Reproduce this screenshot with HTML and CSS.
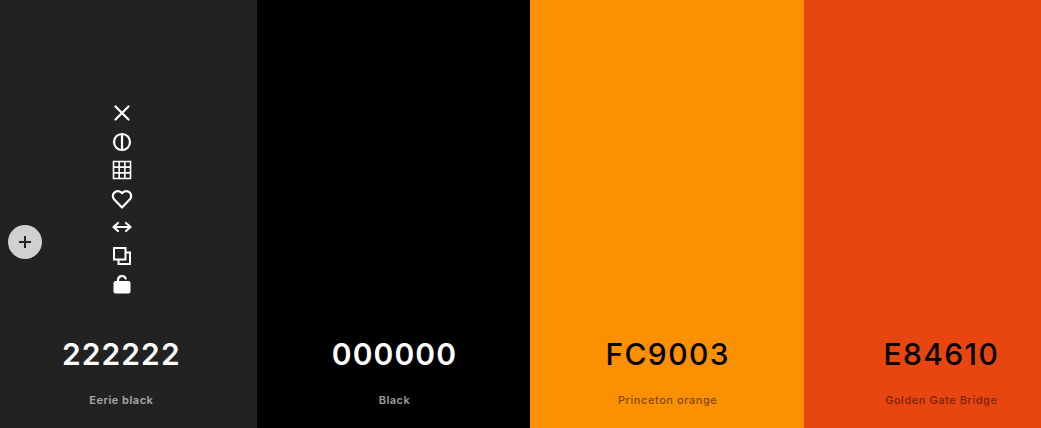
FILE: index.html
```html
<!DOCTYPE html>
<html lang="en">
<head>
<meta charset="utf-8">
<title>Palette</title>
<link rel="stylesheet" href="styles.css">
</head>
<body>
<main class="palette">
  <section class="swatch swatch-eerie">
    <div class="tools">
      <span class="tool"><svg viewBox="0 0 24 24" class="icon"><path d="M5.500 5.500l13 13M18.500 5.500l-13 13"/></svg></span>
      <span class="tool"><svg viewBox="0 0 24 24" class="icon"><circle cx="12" cy="12" r="8"/><path d="M12 4v16"/></svg></span>
      <span class="tool"><svg viewBox="0 0 24 24" class="icon icon-grid"><path d="M3.500 3.500h17v17h-17zM9.170 3.500v17M14.830 3.500v17M3.500 9.170h17M3.500 14.830h17"/></svg></span>
      <span class="tool"><svg viewBox="0 0 24 24" class="icon"><path d="M12 20.500l-7.700-7.900a4.900 4.900 0 0 1 0-7 4.900 4.900 0 0 1 7 0l.7.700.7-.700a4.900 4.900 0 0 1 7 0 4.900 4.900 0 0 1 0 7z"/></svg></span>
      <span class="tool"><svg viewBox="0 0 24 24" class="icon icon-arrows"><path d="M4.500 12h15M8 8l-4.500 4L8 16M16 8l4.500 4-4.500 4"/></svg></span>
      <span class="tool"><svg viewBox="0 0 24 24" class="icon icon-square"><path d="M4 4h11.500v11.500H4zM15.500 8.500H20V20H8.500v-4.500"/></svg></span>
      <span class="tool"><svg viewBox="0 0 24 24" class="icon"><path class="solid" d="M5.500 9h13a2 2 0 0 1 2 2v8.500a2 2 0 0 1-2 2h-13a2 2 0 0 1-2-2V11a2 2 0 0 1 2-2z"/><path d="M8 9.500V8a4 4 0 0 1 7.700-1.500"/></svg></span>
    </div>
    <h2 class="hex">222222</h2>
    <p class="name">Eerie black</p>
  </section>
  <section class="swatch swatch-black">
    <h2 class="hex">000000</h2>
    <p class="name">Black</p>
  </section>
  <section class="swatch swatch-orange">
    <h2 class="hex">FC9003</h2>
    <p class="name">Princeton orange</p>
  </section>
  <section class="swatch swatch-red">
    <h2 class="hex">E84610</h2>
    <p class="name">Golden Gate Bridge</p>
  </section>
</main>
<button class="add" type="button" aria-label="Add colour"><svg viewBox="0 0 24 24" class="add-icon"><path d="M12 6v12M6 12h12"/></svg></button>
</body>
</html>
```
FILE: styles.css
```css
html, body {
  margin: 0;
  height: 100%;
  overflow: hidden;
}
body {
  font-family: Inter, "Liberation Sans", sans-serif;
  background: #000;
  position: relative;
}
.palette {
  display: grid;
  grid-template-columns: repeat(4, 273.67px);
  height: 428px;
  margin-left: -17px;
  width: 1095px;
}
.swatch {
  display: flex;
  flex-direction: column;
  align-items: center;
  justify-content: flex-end;
  padding-left: 1px;
  color: #000;
}
.swatch-eerie { background: #222222; color: #fff; padding-left: 3px; }
.swatch-black { background: #000000; color: #fff; padding-left: 2px; }
.swatch-orange { background: #fc9003; }
.swatch-red { background: #e84610; }
.tools {
  display: flex;
  flex-direction: column;
  align-items: center;
  gap: 4.500px;
  margin: 0 0 38px 2px;
}
.tool {
  display: block;
  width: 24px;
  height: 24px;
}
.icon {
  display: block;
  width: 24px;
  height: 24px;
  fill: none;
  stroke: #fff;
  stroke-width: 2.200;
  stroke-linecap: round;
  stroke-linejoin: round;
}
.icon-grid { stroke-width: 1.600; stroke-linecap: square; stroke-linejoin: miter; }
.icon-square { stroke-width: 2; stroke-linecap: square; stroke-linejoin: miter; }
.icon .solid { fill: #fff; stroke: none; }
.hex {
  margin: 0;
  font-size: 30px;
  line-height: 40px;
  font-weight: 600;
  letter-spacing: 1.100px;
}
.swatch-orange .hex, .swatch-red .hex { font-weight: 500; letter-spacing: 1.400px; }
.name {
  margin: 19px 0 21px;
  font-size: 11px;
  line-height: 14px;
  font-weight: 600;
  letter-spacing: 0.500px;
  opacity: 0.6;
}
.swatch-orange .name, .swatch-red .name { opacity: 0.5; font-weight: 500; letter-spacing: 0.550px; }
.add {
  position: absolute;
  left: 8px;
  top: 225px;
  width: 34px;
  height: 34px;
  padding: 5px;
  border: 0;
  border-radius: 50%;
  background: #d0d0d0;
}
.add-icon {
  display: block;
  width: 24px;
  height: 24px;
  fill: none;
  stroke: #222;
  stroke-width: 2;
}
```
